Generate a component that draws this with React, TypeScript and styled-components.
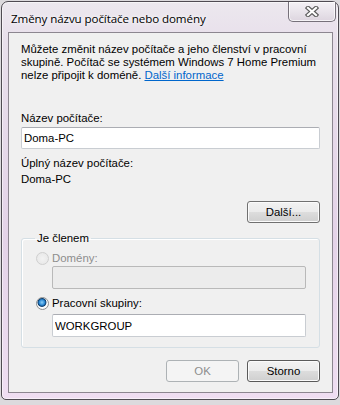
import styled, { createGlobalStyle } from 'styled-components';

const GlobalStyle = createGlobalStyle`
  html, body {
    margin: 0;
    padding: 0;
    background: #dcdadd;
  }
  body {
    font-family: 'Liberation Sans', Arial, sans-serif;
    font-size: 11.4px;
    color: #000;
  }
`;

export default function App() {
  return (
    <>
      <GlobalStyle />
      <Window>
        <TitleBar>
          <Title>Změny názvu počítače nebo domény</Title>
          <CloseButton aria-label="Zavřít">
            <svg width="14" height="11" viewBox="0 0 14 11">
              <path d="M3 2 L11 9 M11 2 L3 9" stroke="#5b5b5b" strokeWidth="4.4" strokeLinecap="square" />
              <path d="M3 2 L11 9 M11 2 L3 9" stroke="#ffffff" strokeWidth="2.2" strokeLinecap="square" />
            </svg>
          </CloseButton>
        </TitleBar>
        <Client>
          <Intro>
            Můžete změnit název počítače a jeho členství v pracovní
            <br />
            skupině. Počítač se systémem Windows 7 Home Premium
            <br />
            nelze připojit k doméně. <Link href="#">Další informace</Link>
          </Intro>

          <Label $top={30}>Název počítače:</Label>
          <TextBox $top={2} defaultValue="Doma-PC" />

          <Label $top={8}>Úplný název počítače:</Label>
          <Label $top={3}>Doma-PC</Label>

          <ButtonRow $top={15}>
            <Button>Další...</Button>
          </ButtonRow>

          <Group>
            <Legend>Je členem</Legend>
            <RadioRow $top={1} $disabled>
              <Radio $disabled />
              <span>Domény:</span>
            </RadioRow>
            <IndentBox $top={1} disabled />
            <RadioRow $top={8}>
              <Radio $checked />
              <span>Pracovní skupiny:</span>
            </RadioRow>
            <IndentBox $top={4} defaultValue="WORKGROUP" />
          </Group>

          <ButtonRow $top={12}>
            <Button disabled>OK</Button>
            <Button $default>Storno</Button>
          </ButtonRow>
        </Client>
      </Window>
    </>
  );
}

const Window = styled.div`
  box-sizing: border-box;
  margin: 1px 0 0 1px;
  width: 338px;
  height: 399px;
  border: 1px solid #4f4b52;
  border-radius: 7px 7px 5px 5px;
  background: linear-gradient(to bottom, #ece8ee 0%, #e8dfeb 10%, #e4d3e8 60%, #efdef2 100%);
  padding: 0 5px 6px 6px;
  display: flex;
  flex-direction: column;
  box-shadow: inset 0 0 0 1px rgba(255, 255, 255, 0.55);
`;

const TitleBar = styled.div`
  height: 30px;
  display: flex;
  align-items: flex-start;
  justify-content: space-between;
`;

const Title = styled.div`
  font-family: 'Open Sans', 'Noto Sans', sans-serif;
  font-size: 11.6px;
  color: #000;
  padding: 9px 0 0 3px;
  letter-spacing: -0.1px;
  text-shadow: 0 0 6px #fff, 0 0 3px #fff;
`;

const CloseButton = styled.div`
  box-sizing: border-box;
  width: 48px;
  height: 20px;
  margin-right: -3px;
  border: 1px solid #76717a;
  border-top: none;
  border-radius: 0 0 5px 5px;
  background: linear-gradient(to bottom, #f4f1f5 0%, #e9e4eb 50%, #ddd5df 100%);
  box-shadow: inset 0 0 0 1px rgba(255, 255, 255, 0.7);
  display: flex;
  align-items: center;
  justify-content: center;
`;

const Client = styled.div`
  flex: 1;
  box-sizing: border-box;
  border: 1px solid #8c8690;
  background: #f0f0f0;
  padding: 10px 12px 0 12px;
  display: flex;
  flex-direction: column;
`;

const Intro = styled.p`
  margin: 0;
  line-height: 13px;
  white-space: nowrap;
`;

const Link = styled.a`
  color: #0066cc;
  text-decoration: underline;
`;

const Label = styled.div<{ $top: number }>`
  margin-top: ${(p) => p.$top}px;
  line-height: 13px;
`;

const TextBox = styled.input<{ $top: number }>`
  box-sizing: border-box;
  margin-top: ${(p) => p.$top}px;
  width: 100%;
  height: 22px;
  border: 1px solid #c9cdd2;
  border-top-color: #abadb3;
  border-radius: 2px;
  background: #fff;
  padding: 0 2px;
  font-family: 'Liberation Sans', Arial, sans-serif;
  font-size: 11.4px;
  color: #000;
  outline: none;
`;

const IndentBox = styled(TextBox)`
  height: 23px;
  margin-left: 16px;
  width: calc(100% - 16px);
  &:disabled {
    background: #ececec;
    border-color: #b9b9b9;
  }
`;

const ButtonRow = styled.div<{ $top: number }>`
  margin-top: ${(p) => p.$top}px;
  display: flex;
  justify-content: flex-end;
  gap: 8px;
`;

const Button = styled.button<{ $default?: boolean }>`
  box-sizing: border-box;
  width: 73px;
  height: 22px;
  padding: 0;
  border: 1px solid ${(p) => (p.$default ? '#5a5a5a' : '#707070')};
  border-radius: 3px;
  background: linear-gradient(to bottom, #f2f2f2 0%, #ebebeb 49%, #dddddd 50%, #cfcfcf 100%);
  box-shadow: inset 0 0 0 1px #fbfbfb;
  font-family: 'Liberation Sans', Arial, sans-serif;
  font-size: 11.4px;
  color: #000;

  &:disabled {
    border-color: #adb2b5;
    background: #f4f4f4;
    box-shadow: none;
    color: #8d8d8d;
  }
`;

const Group = styled.fieldset`
  margin: 9px 0 0 0;
  padding: 6px 13px 10px 14px;
  border: 1px solid #d5dfe5;
  border-radius: 3px;
  box-shadow: inset 1px 1px 0 #fff;
  min-width: 0;
`;

const Legend = styled.legend`
  padding: 0 2px;
  margin-left: -1px;
  line-height: 13px;
`;

const RadioRow = styled.div<{ $top: number; $disabled?: boolean }>`
  margin-top: ${(p) => p.$top}px;
  display: flex;
  align-items: center;
  gap: 3px;
  line-height: 13px;
  color: ${(p) => (p.$disabled ? '#8d8d8d' : '#000')};
`;

const Radio = styled.span<{ $checked?: boolean; $disabled?: boolean }>`
  box-sizing: border-box;
  width: 13px;
  height: 13px;
  border-radius: 50%;
  border: 1px solid ${(p) => (p.$disabled ? '#cfcfcf' : '#8e8f8f')};
  background: ${(p) =>
    p.$disabled
      ? 'radial-gradient(circle at 50% 50%, #f2f2f2 0%, #e6e6e6 100%)'
      : p.$checked
      ? 'radial-gradient(circle at 45% 40%, #8fd0f6 0%, #2c8ad6 30%, #0d3e6e 45%, #ffffff 55%, #e2e6ea 100%)'
      : 'radial-gradient(circle, #ffffff 0%, #e2e6ea 100%)'};
  flex: none;
`;
